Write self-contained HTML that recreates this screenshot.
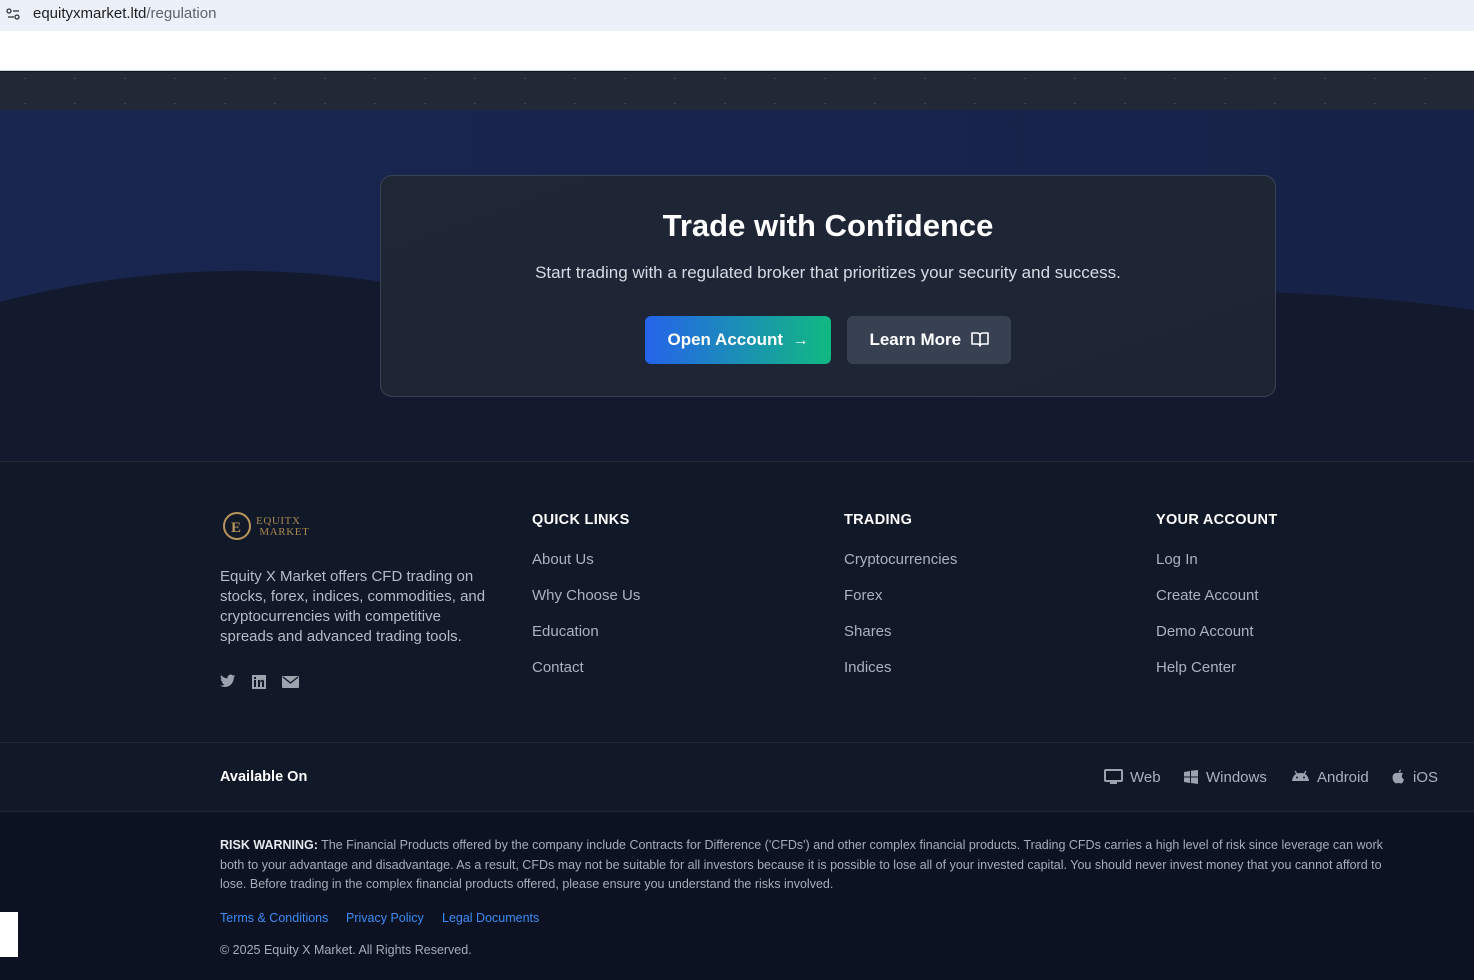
<!DOCTYPE html>
<html><head><meta charset="utf-8"><style>
*{margin:0;padding:0;box-sizing:border-box}
body{width:1474px;height:980px;overflow:hidden;background:#111827;font-family:"Liberation Sans",sans-serif;position:relative}
.abs{position:absolute}
.bar{left:0;top:0;width:1474px;height:31px;background:#ebf0f9}
.url{left:33px;top:5px;font-size:15px;color:#1f1f1f}
.url span{color:#5f6368}
.white{left:0;top:31px;width:1474px;height:40px;background:#fff;border-bottom:1px solid #d0d4da}
.strip{left:0;top:72px;width:1474px;height:38px;background:#212836;background-image:radial-gradient(#3a4354 1px,transparent 1.2px);background-size:50px 25px;background-position:0 -6px}
.hero{left:0;top:110px;width:1474px;height:351px;background:linear-gradient(90deg,#182650,#172248);overflow:hidden}
.card{left:380px;top:175px;width:896px;height:222px;background:linear-gradient(160deg,#1f2737,#1d2535);border:1px solid #394252;border-radius:12px;text-align:center}
.card h1{font-size:31px;color:#fff;margin-top:32px;font-weight:bold}
.card p{font-size:17px;color:#d6dbe3;margin-top:19px}
.btn{position:absolute;top:140px;height:48px;border-radius:6px;color:#fff;font-size:17px;font-weight:bold;line-height:48px}
.b1{left:264px;width:186px;background:linear-gradient(90deg,#2563eb,#10b981)}
.b2{left:466px;width:164px;background:#374151}
.hr{left:0;width:1474px;height:1px;background:#1f2737}
h4{position:absolute;top:512px;font-size:14.5px;color:#fff;letter-spacing:.3px;font-weight:bold}
.col a{position:absolute;font-size:15px;color:#aab2bf;text-decoration:none}
.desc{left:220px;top:567px;width:272px;font-size:15px;line-height:20px;color:#b4bcc8}
.bottom{left:0;top:812px;width:1474px;height:168px;background:#0c1221}
.risk{left:220px;top:836px;width:1180px;font-size:12.5px;line-height:19.5px;color:#a5adb9}
.risk b{color:#e5e7eb}
.links a{position:absolute;top:911px;font-size:12.5px;color:#3b8cf6;text-decoration:none}
.plat{top:769px;font-size:15px;color:#aab2bf}
</style></head><body>
<div class="abs bar"></div>
<svg class="abs" style="left:5px;top:6px" width="17" height="17" viewBox="0 0 17 17"><circle cx="4" cy="5" r="2" fill="none" stroke="#333" stroke-width="1.3"/><line x1="8" y1="5" x2="14" y2="5" stroke="#333" stroke-width="1.3"/><line x1="3" y1="11" x2="9" y2="11" stroke="#333" stroke-width="1.3"/><circle cx="12" cy="11" r="2" fill="none" stroke="#333" stroke-width="1.3"/></svg>
<div class="abs url">equityxmarket.ltd<span>/regulation</span></div>
<div class="abs white"></div>
<div class="abs strip"></div>
<div class="abs hero"><svg width="1474" height="351" style="position:absolute;left:0;top:0"><path d="M0 192 Q200 140 400 175 Q700 215 1000 190 Q1250 168 1474 200 L1474 351 L0 351Z" fill="#141a2d"/></svg></div>
<div class="abs card"><h1>Trade with Confidence</h1><p>Start trading with a regulated broker that prioritizes your security and success.</p>
<div class="btn b1">Open Account &nbsp;<span style="font-size:16px">→</span></div>
<div class="btn b2">Learn More &nbsp;<svg width="18" height="16" viewBox="0 0 18 16" style="vertical-align:-2px"><path d="M1 2h5q3 0 3 3v10q0-2-3-2H1zM17 2h-5q-3 0-3 3v10q0-2 3-2h5z" fill="none" stroke="#fff" stroke-width="1.6" stroke-linejoin="round"/></svg></div></div>
<div class="abs hr" style="top:461px"></div>
<svg class="abs" style="left:222px;top:511px" width="30" height="30" viewBox="0 0 30 30"><circle cx="15" cy="15" r="13" fill="none" stroke="#b8955a" stroke-width="2"/><text x="9" y="21" font-size="15" font-weight="bold" fill="#b8955a" font-family="Liberation Serif">E</text></svg>
<div class="abs" style="left:256px;top:516px;font-family:'Liberation Serif',serif;font-size:11px;line-height:11px;color:#a8874f;letter-spacing:.6px">EQUITX<br>&nbsp;MARKET</div>
<div class="abs desc">Equity X Market offers CFD trading on stocks, forex, indices, commodities, and cryptocurrencies with competitive spreads and advanced trading tools.</div>
<svg class="abs" style="left:220px;top:674px" width="16" height="15" viewBox="0 0 24 22"><path d="M23 3a9 9 0 0 1-2.7.8A4.7 4.7 0 0 0 22.4 1a9 9 0 0 1-3 1.1A4.7 4.7 0 0 0 11.4 6.4 13.3 13.3 0 0 1 1.7 1.5a4.7 4.7 0 0 0 1.5 6.3 4.7 4.7 0 0 1-2.1-.6A4.7 4.7 0 0 0 4.8 11.8a4.7 4.7 0 0 1-2.1.1 4.7 4.7 0 0 0 4.4 3.2A9.400 9.400 0 0 1 0 17.1 13.300 13.300 0 0 0 7.200 19.200c8.700 0 13.400-7.200 13.400-13.400v-.6A9.500 9.500 0 0 0 23 3z" fill="#9ca3af"/></svg>
<svg class="abs" style="left:252px;top:675px" width="14" height="14" viewBox="0 0 14 14"><rect width="14" height="14" fill="#9ca3af"/><rect x="2" y="5" width="2" height="7" fill="#111827"/><rect x="2" y="2" width="2" height="2" fill="#111827"/><path d="M6 5h2v1q1-1.3 2.5-1.3Q12 4.7 12 7v5h-2V7.5q0-1-1-1t-1 1V12H6z" fill="#111827"/></svg>
<svg class="abs" style="left:282px;top:676px" width="17" height="12" viewBox="0 0 17 12"><rect width="17" height="12" rx="1" fill="#9ca3af"/><path d="M1 1l7.500 6L16 1" fill="none" stroke="#111827" stroke-width="1.4"/></svg>
<div class="col">
<h4 style="left:532px">QUICK LINKS</h4>
<a style="left:532px;top:551px">About Us</a><a style="left:532px;top:587px">Why Choose Us</a><a style="left:532px;top:623px">Education</a><a style="left:532px;top:659px">Contact</a>
<h4 style="left:844px">TRADING</h4>
<a style="left:844px;top:551px">Cryptocurrencies</a><a style="left:844px;top:587px">Forex</a><a style="left:844px;top:623px">Shares</a><a style="left:844px;top:659px">Indices</a>
<h4 style="left:1156px">YOUR ACCOUNT</h4>
<a style="left:1156px;top:551px">Log In</a><a style="left:1156px;top:587px">Create Account</a><a style="left:1156px;top:623px">Demo Account</a><a style="left:1156px;top:659px">Help Center</a>
</div>
<div class="abs hr" style="top:742px"></div>
<div class="abs" style="left:220px;top:769px;font-size:14.5px;font-weight:bold;color:#fff">Available On</div>
<svg class="abs" style="left:1104px;top:769px" width="19" height="16" viewBox="0 0 19 16"><rect x="1" y="1" width="17" height="11" rx="1" fill="none" stroke="#9ca3af" stroke-width="2"/><rect x="6" y="13" width="7" height="2" fill="#9ca3af"/></svg>
<div class="abs plat" style="left:1130px">Web</div>
<svg class="abs" style="left:1184px;top:770px" width="14" height="14" viewBox="0 0 14 14"><path d="M0 2l6-1v5.500H0zM7 .8L14 0v6.500H7zM0 7.500h6V13L0 12zM7 7.500h7V14l-7-1z" fill="#9ca3af"/></svg>
<div class="abs plat" style="left:1206px">Windows</div>
<svg class="abs" style="left:1291px;top:770px" width="19" height="12" viewBox="0 0 19 12"><path d="M1 11Q2 3 9.500 3T18 11z" fill="#9ca3af"/><path d="M4 1l2 3M15 1l-2 3" stroke="#9ca3af" stroke-width="1.2"/><circle cx="6" cy="7.500" r="1" fill="#111827"/><circle cx="13" cy="7.500" r="1" fill="#111827"/></svg>
<div class="abs plat" style="left:1317px">Android</div>
<svg class="abs" style="left:1392px;top:769px" width="13" height="15" viewBox="0 0 13 15"><path d="M6.500 4Q9 3 11 4.500 9.500 6 10 8.500 11 10 12 10.500 11 14 9 14.500 7.500 14 6.500 14 5.500 14 4 14.500 1 13 .5 9 .5 5 3.500 4z" fill="#9ca3af"/><path d="M6.500 3.500Q7 1 9 .5 9 3 6.500 3.500z" fill="#9ca3af"/></svg>
<div class="abs plat" style="left:1413px">iOS</div>
<div class="abs hr" style="top:811px"></div>
<div class="abs bottom"></div>
<div class="abs risk"><b>RISK WARNING:</b> The Financial Products offered by the company include Contracts for Difference ('CFDs') and other complex financial products. Trading CFDs carries a high level of risk since leverage can work both to your advantage and disadvantage. As a result, CFDs may not be suitable for all investors because it is possible to lose all of your invested capital. You should never invest money that you cannot afford to lose. Before trading in the complex financial products offered, please ensure you understand the risks involved.</div>
<div class="links"><a style="left:220px">Terms &amp; Conditions</a><a style="left:346px">Privacy Policy</a><a style="left:442px">Legal Documents</a></div>
<div class="abs" style="left:220px;top:943px;font-size:12.5px;color:#a5adb9">© 2025 Equity X Market. All Rights Reserved.</div>
<div class="abs" style="left:0;top:912px;width:18px;height:45px;background:#fff"></div>
</body></html>
